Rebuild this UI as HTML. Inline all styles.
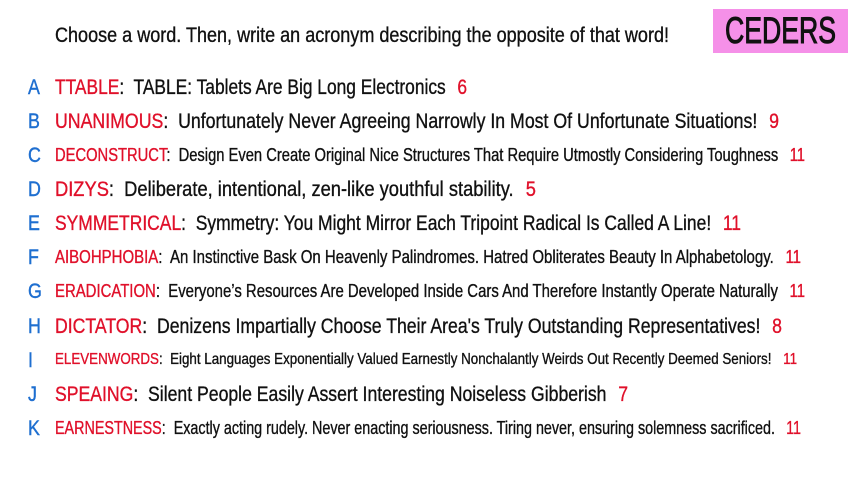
<!DOCTYPE html>
<html><head><meta charset="utf-8"><style>
html,body{margin:0;padding:0;background:#fff;width:853px;height:480px;overflow:hidden;position:relative;font-family:"Liberation Sans",sans-serif;color:#111;}
.l{position:absolute;white-space:nowrap;transform-origin:0 50%;line-height:1;-webkit-text-stroke:0.35px currentColor;}
.k{position:absolute;left:28px;color:#1f6fd0;font-size:21px;transform:scaleX(0.85);transform-origin:0 50%;line-height:1;-webkit-text-stroke:0.4px currentColor;}
.r{color:#e0102a;}
.n{color:#e0102a;margin-left:14px;}
#box{position:absolute;left:713px;top:9px;width:135px;height:44px;background:#f590e8;}
#ced{position:absolute;left:725px;top:12px;font-size:37px;color:#111;white-space:nowrap;transform-origin:0 0;line-height:1;-webkit-text-stroke:1px #111;}
</style></head><body>
<div class="l" data-w="614" style="left:55px;top:25px;font-size:21px">Choose a word. Then, write an acronym describing the opposite of that word!</div>
<div id="box"></div><div id="ced" data-w="111">CEDERS</div>

<div class="k" style="top:77px">A</div>
<div class="l" data-w="412" style="left:55px;top:77px;font-size:21px"><span class="r">TTABLE</span>:&nbsp; TABLE: Tablets Are Big Long Electronics<span class="n">6</span></div>
<div class="k" style="top:111px">B</div>
<div class="l" data-w="724" style="left:55px;top:111px;font-size:21px"><span class="r">UNANIMOUS</span>:&nbsp; Unfortunately Never Agreeing Narrowly In Most Of Unfortunate Situations!<span class="n">9</span></div>
<div class="k" style="top:145px">C</div>
<div class="l" data-w="750" style="left:55px;top:146px;font-size:18px"><span class="r">DECONSTRUCT</span>:&nbsp; Design Even Create Original Nice Structures That Require Utmostly Considering Toughness<span class="n">11</span></div>
<div class="k" style="top:179px">D</div>
<div class="l" data-w="481" style="left:55px;top:179px;font-size:21px"><span class="r">DIZYS</span>:&nbsp; Deliberate, intentional, zen-like youthful stability.<span class="n">5</span></div>
<div class="k" style="top:213px">E</div>
<div class="l" data-w="686" style="left:55px;top:213px;font-size:21px"><span class="r">SYMMETRICAL</span>:&nbsp; Symmetry: You Might Mirror Each Tripoint Radical Is Called A Line!<span class="n">11</span></div>
<div class="k" style="top:247px">F</div>
<div class="l" data-w="746" style="left:55px;top:248px;font-size:18px"><span class="r">AIBOHPHOBIA</span>:&nbsp; An Instinctive Bask On Heavenly Palindromes. Hatred Obliterates Beauty In Alphabetology.<span class="n">11</span></div>
<div class="k" style="top:281px">G</div>
<div class="l" data-w="750" style="left:55px;top:282px;font-size:18px"><span class="r">ERADICATION</span>:&nbsp; Everyone’s Resources Are Developed Inside Cars And Therefore Instantly Operate Naturally<span class="n">11</span></div>
<div class="k" style="top:316px">H</div>
<div class="l" data-w="727" style="left:55px;top:316px;font-size:21px"><span class="r">DICTATOR</span>:&nbsp; Denizens Impartially Choose Their Area's Truly Outstanding Representatives!<span class="n">8</span></div>
<div class="k" style="top:350px">I</div>
<div class="l" data-w="742" style="left:55px;top:352px;font-size:16px"><span class="r">ELEVENWORDS</span>:&nbsp; Eight Languages Exponentially Valued Earnestly Nonchalantly Weirds Out Recently Deemed Seniors!<span class="n">11</span></div>
<div class="k" style="top:384px">J</div>
<div class="l" data-w="573" style="left:55px;top:384px;font-size:21px"><span class="r">SPEAING</span>:&nbsp; Silent People Easily Assert Interesting Noiseless Gibberish<span class="n">7</span></div>
<div class="k" style="top:418px">K</div>
<div class="l" data-w="746" style="left:55px;top:419px;font-size:18px"><span class="r">EARNESTNESS</span>:&nbsp; Exactly acting rudely. Never enacting seriousness. Tiring never, ensuring solemness sacrificed.<span class="n">11</span></div>
<script>
document.querySelectorAll('[data-w]').forEach(function(e){
  var w=e.getBoundingClientRect().width;var t=+e.getAttribute('data-w');
  e.style.transform='scaleX('+(t/w)+')';
});
</script>
</body></html>
